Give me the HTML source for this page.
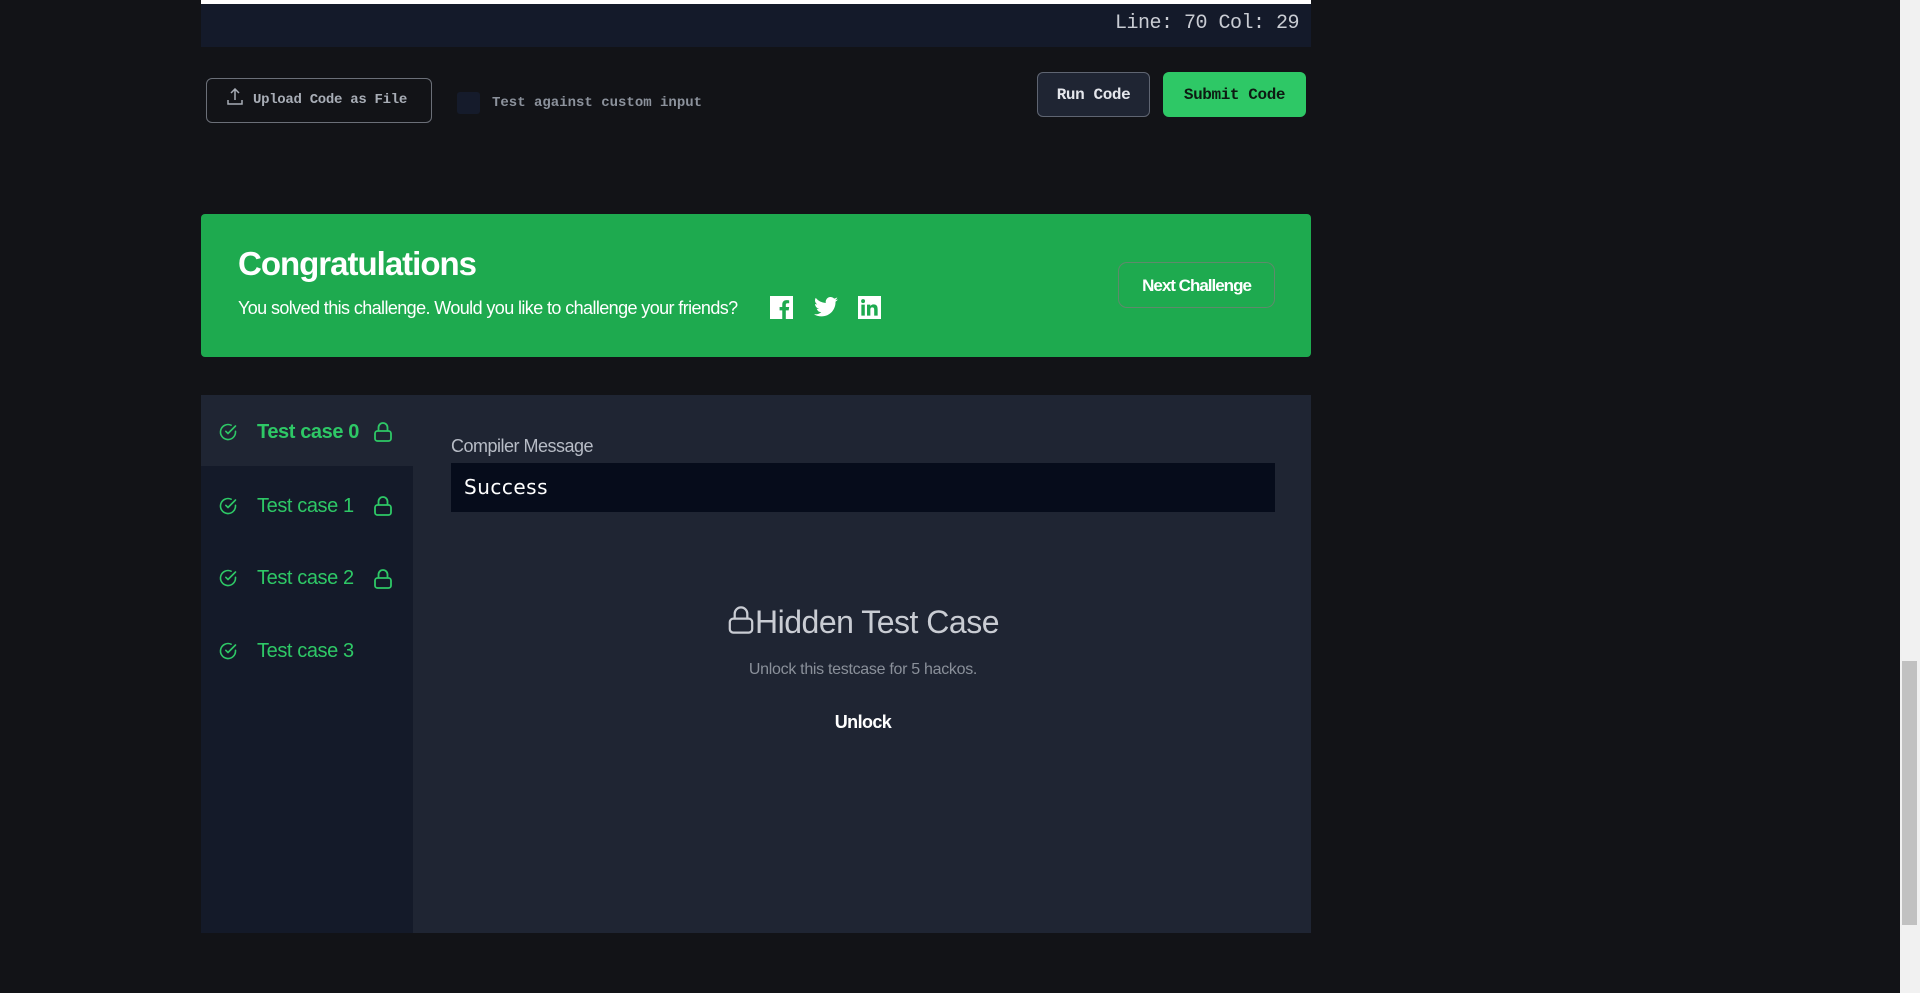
<!DOCTYPE html>
<html><head><meta charset="utf-8"><style>
*{box-sizing:border-box;margin:0;padding:0}
body{width:1920px;height:993px;background:#121317;position:relative;overflow:hidden;font-family:"Liberation Sans",sans-serif}
.abs{position:absolute}
.mono{font-family:"Liberation Mono","DejaVu Sans Mono",monospace}
</style></head><body>
<div class="abs" style="left:201px;top:0;width:1110px;height:4px;background:#fff"></div>
<div class="abs" style="left:201px;top:4px;width:1110px;height:43px;background:#141a2a"></div>
<div class="abs mono" style="right:621px;top:12px;color:#c9ccd3;font-size:20px;letter-spacing:-0.5px">Line: 70 Col: 29</div>

<div class="abs mono" style="left:206px;top:78px;width:226px;height:45px;border:1px solid #6b6f78;border-radius:6px;color:#a8adb6;font-size:14px;font-weight:bold;line-height:43px;padding-left:46px;letter-spacing:-0.3px">Upload Code as File
<svg class="abs" style="left:20px;top:9px" width="16" height="18" viewBox="0 0 16 18" fill="none" stroke="#a8adb6" stroke-width="1.5"><path d="M8 12V2M4 5l4-4 4 4M1 12v4h14v-4"/></svg></div>
<div class="abs" style="left:457px;top:92px;width:23px;height:22px;background:#151b2b;border-radius:3px"></div>
<div class="abs mono" style="left:492px;top:95px;color:#8c929c;font-size:14px;font-weight:bold">Test against custom input</div>

<div class="abs mono" style="left:1037px;top:72px;width:113px;height:45px;background:#1f2533;border:1px solid #5f6572;border-radius:6px;color:#e5e7ec;font-size:16px;font-weight:bold;text-align:center;line-height:45px;letter-spacing:-0.4px">Run Code</div>
<div class="abs mono" style="left:1163px;top:72px;width:143px;height:45px;background:#2ec866;border-radius:6px;color:#0d1a12;font-size:16px;font-weight:bold;text-align:center;line-height:47px;letter-spacing:-0.4px">Submit Code</div>

<div class="abs" style="left:201px;top:214px;width:1110px;height:143px;background:#1eaa4f;border-radius:4px"></div>
<div class="abs" style="left:238px;top:245px;color:#fff;font-size:33px;font-weight:bold;letter-spacing:-1px">Congratulations</div>
<div class="abs" style="left:238px;top:298px;color:#fff;font-size:18px;letter-spacing:-0.6px">You solved this challenge. Would you like to challenge your friends?</div>
<svg class="abs" style="left:770px;top:296px" width="23" height="23" viewBox="0 0 24 24"><rect width="24" height="24" fill="#fff"/><path d="M16.5 24V15h3l.5-3.5h-3.5V9.3c0-1 .3-1.7 1.8-1.7H20V4.5c-.3 0-1.4-.2-2.7-.2-2.7 0-4.5 1.6-4.5 4.6v2.6H10V15h2.8v9z" fill="#1eaa4f"/></svg>
<svg class="abs" style="left:814px;top:296px" width="24" height="22" viewBox="0 0 24 20"><path fill="#fff" d="M24 2.4a10 10 0 0 1-2.8.8A5 5 0 0 0 23.3.4a10 10 0 0 1-3.1 1.2A4.9 4.9 0 0 0 11.8 6 14 14 0 0 1 1.7.9a4.9 4.9 0 0 0 1.5 6.6A4.9 4.9 0 0 1 1 6.9a4.9 4.9 0 0 0 3.9 4.8 5 5 0 0 1-2.2.1 4.9 4.9 0 0 0 4.6 3.4A9.9 9.9 0 0 1 0 17.2 14 14 0 0 0 7.5 19.4c9.1 0 14-7.5 14-14v-.6A10 10 0 0 0 24 2.4z"/></svg>
<svg class="abs" style="left:858px;top:296px" width="23" height="23" viewBox="0 0 24 24"><rect width="24" height="24" fill="#fff"/><path fill="#1eaa4f" d="M3.5 9h3.6v11.5H3.5zM5.3 3.3a2 2 0 1 1 0 4.1 2 2 0 0 1 0-4.1zM9.4 9h3.4v1.6c.5-.9 1.7-1.9 3.4-1.9 3.6 0 4.3 2.4 4.3 5.5v6.3h-3.6v-5.6c0-1.3 0-3-1.900-3s-2.1 1.4-2.1 2.9v5.7H9.4z"/></svg>
<div class="abs" style="left:1118px;top:262px;width:157px;height:46px;border:1px solid #5f8a6c;border-radius:9px;color:#fff;font-size:17px;font-weight:bold;text-align:center;line-height:46px;letter-spacing:-1px">Next Challenge</div>

<div class="abs" style="left:201px;top:395px;width:1110px;height:538px;background:#1f2533"></div>
<div class="abs" style="left:201px;top:466px;width:212px;height:467px;background:#141a29"></div>

<svg width="0" height="0" style="position:absolute"><defs>
<symbol id="chk" viewBox="0 0 20 20"><path d="M17.5 9.3v.7a7.5 7.5 0 1 1-4.4-6.8" fill="none" stroke="#2ec866" stroke-width="1.6" stroke-linecap="round"/><path d="M17.5 4 10 11.5 7.8 9.3" fill="none" stroke="#2ec866" stroke-width="1.6" stroke-linecap="round" stroke-linejoin="round"/></symbol>
<symbol id="lk" viewBox="0 0 20 22"><rect x="2" y="10" width="16" height="10" rx="2.5" fill="none" stroke="#2ec866" stroke-width="1.8"/><path d="M5.5 10V6.5a4.5 4.5 0 0 1 9 0V10" fill="none" stroke="#2ec866" stroke-width="1.8"/></symbol>
</defs></svg>

<svg class="abs" style="left:218px;top:422px" width="20" height="20"><use href="#chk"/></svg>
<div class="abs" style="left:257px;top:421px;color:#2ec866;font-size:20px;font-weight:bold;letter-spacing:-0.4px">Test case 0</div>
<svg class="abs" style="left:373px;top:421px" width="20" height="22"><use href="#lk"/></svg>

<svg class="abs" style="left:218px;top:496px" width="20" height="20"><use href="#chk"/></svg>
<div class="abs" style="left:257px;top:495px;color:#2ec866;font-size:20px;letter-spacing:-0.4px">Test case 1</div>
<svg class="abs" style="left:373px;top:495px" width="20" height="22"><use href="#lk"/></svg>

<svg class="abs" style="left:218px;top:568px" width="20" height="20"><use href="#chk"/></svg>
<div class="abs" style="left:257px;top:567px;color:#2ec866;font-size:20px;letter-spacing:-0.4px">Test case 2</div>
<svg class="abs" style="left:373px;top:568px" width="20" height="22"><use href="#lk"/></svg>

<svg class="abs" style="left:218px;top:641px" width="20" height="20"><use href="#chk"/></svg>
<div class="abs" style="left:257px;top:640px;color:#2ec866;font-size:20px;letter-spacing:-0.4px">Test case 3</div>

<div class="abs" style="left:451px;top:436px;color:#b7bcc6;font-size:18px;letter-spacing:-0.5px">Compiler Message</div>
<div class="abs" style="left:451px;top:463px;width:824px;height:49px;background:#060c1b"></div>
<div class="abs" style="left:464px;top:475px;color:#fff;font-size:20px;font-family:'DejaVu Sans',sans-serif;letter-spacing:0.5px">Success</div>

<div class="abs" style="left:451px;top:604px;width:824px;text-align:center;color:#c9ccd3;font-size:32px;letter-spacing:-0.5px">
<svg style="vertical-align:-3px" width="28" height="32" viewBox="0 0 20 22"><rect x="2" y="10" width="16" height="10" rx="2.5" fill="none" stroke="#c9ccd3" stroke-width="1.6"/><path d="M5.5 10V6.5a4.5 4.5 0 0 1 9 0V10" fill="none" stroke="#c9ccd3" stroke-width="1.6"/></svg>Hidden Test Case</div>
<div class="abs" style="left:451px;top:661px;width:824px;text-align:center;color:#8a909a;font-size:16px;letter-spacing:-0.3px">Unlock this testcase for 5 hackos.</div>
<div class="abs" style="left:451px;top:712px;width:824px;text-align:center;color:#fff;font-size:18px;font-weight:bold;letter-spacing:-0.6px">Unlock</div>

<div class="abs" style="left:1900px;top:0;width:20px;height:993px;background:#f1f1f1"></div>
<div class="abs" style="left:1902px;top:661px;width:15px;height:264px;background:#c1c1c1"></div>
</body></html>
